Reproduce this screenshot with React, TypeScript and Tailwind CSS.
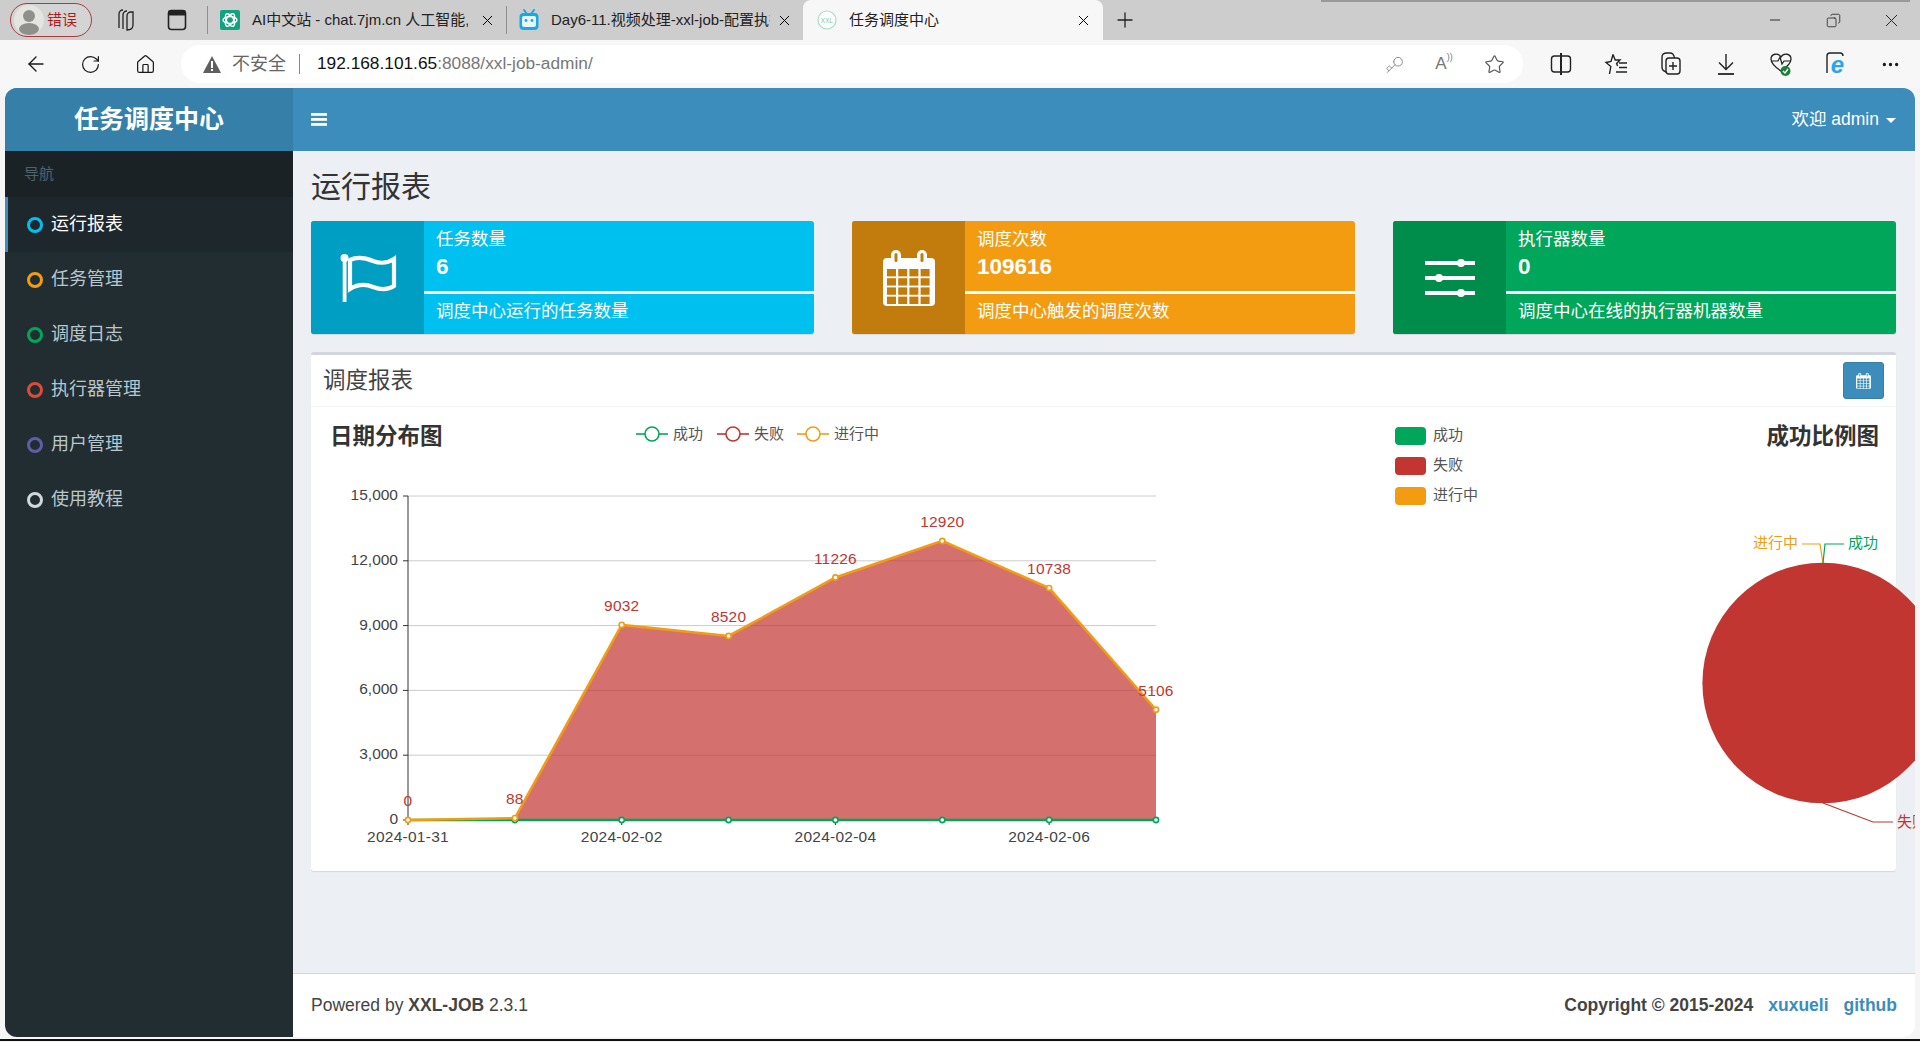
import React from 'react';
import { ArrowLeft, RotateCw, Home, Key, Star, Plus, X, Minus, Copy, MoreHorizontal } from 'lucide-react';

const menu = [
  { name: '运行报表', ring: 'border-[#00c0ef]', active: true },
  { name: '任务管理', ring: 'border-[#f39c12]' },
  { name: '调度日志', ring: 'border-[#00a65a]' },
  { name: '执行器管理', ring: 'border-[#dd4b39]' },
  { name: '用户管理', ring: 'border-[#605ca8]' },
  { name: '使用教程', ring: 'border-[#d2d6de]' },
];

// chart scale, page coordinates
const values = [0, 88, 9032, 8520, 11226, 12920, 10738, 5106];
const px = (i: number) => 408 + i * (748 / 7);
const py = (v: number) => 820 - v * 0.0216;
const topLine = values.map((v, i) => `${px(i)},${py(v)}`).join(' ');

const CalendarIcon = ({ w, h, hole }: { w: number; h: number; hole: string }) => (
  <svg width={w} height={h} viewBox="0 0 52 56">
    <rect x="0" y="8" width="52" height="48" rx="4" fill="#fff" />
    <rect x="8" y="0" width="10" height="14" rx="5" fill="#fff" />
    <rect x="34" y="0" width="10" height="14" rx="5" fill="#fff" />
    <rect x="11.5" y="3" width="3" height="9" rx="1.5" fill={hole} />
    <rect x="37.5" y="3" width="3" height="9" rx="1.5" fill={hole} />
    {[0, 1, 2, 3].map((r) =>
      [0, 1, 2, 3].map((c) => (
        <rect key={`${r}-${c}`} x={4 + c * 11.2} y={19 + r * 9.2} width="9" height="7.4" fill={hole} />
      ))
    )}
  </svg>
);

const FlagIcon = () => (
  <svg width="60" height="52" viewBox="338 250 60 52">
    <circle cx="344.5" cy="256" r="4" fill="#fff" />
    <rect x="342.7" y="256" width="3.8" height="44" fill="#fff" />
    <path d="M350 258C358 254 366 256 373 259C381 262 388 261 394 257V284C388 288 381 288 373 285C366 282 358 282 350 287Z" fill="none" stroke="#fff" strokeWidth="4.2" />
  </svg>
);

const SlidersIcon = () => (
  <svg width="50" height="44" viewBox="1424 253 50 44">
    <rect x="1424" y="258" width="50" height="4" fill="#fff" />
    <rect x="1424" y="273" width="50" height="4" fill="#fff" />
    <rect x="1424" y="288" width="50" height="4" fill="#fff" />
    <circle cx="1460" cy="260" r="4" fill="#fff" />
    <circle cx="1438" cy="275" r="4" fill="#fff" />
    <circle cx="1460" cy="290" r="4" fill="#fff" />
  </svg>
);

const infos = [
  { title: '任务数量', num: '6', desc: '调度中心运行的任务数量', bg: 'bg-[#00c0ef]', dark: 'bg-[#009ec2]', icon: <FlagIcon /> },
  { title: '调度次数', num: '109616', desc: '调度中心触发的调度次数', bg: 'bg-[#f39c12]', dark: 'bg-[#c27c0e]', icon: <CalendarIcon w={52} h={56} hole="#c27c0e" /> },
  { title: '执行器数量', num: '0', desc: '调度中心在线的执行器机器数量', bg: 'bg-[#00a65a]', dark: 'bg-[#008d4c]', icon: <SlidersIcon /> },
];

const LineChart = () => (
  <svg width="1060" height="464" viewBox="311 407 1060 464" className="shrink-0">
    <text x="330" y="444" fontSize="22.5" fontWeight="700" fill="#333">日期分布图</text>
    {[
      { x: 636, name: '成功', c: '#00a65a' },
      { x: 717, name: '失败', c: '#c23531' },
      { x: 797, name: '进行中', c: '#f39c12' },
    ].map((l) => (
      <g key={l.name}>
        <line x1={l.x} x2={l.x + 32} y1="434" y2="434" stroke={l.c} strokeWidth="1.6" />
        <circle cx={l.x + 16} cy="434" r="7" fill="#fff" stroke={l.c} strokeWidth="1.6" />
        <text x={l.x + 37} y="439" fontSize="15" fill="#555">{l.name}</text>
      </g>
    ))}
    {[15000, 12000, 9000, 6000, 3000, 0].map((v) => (
      <g key={v}>
        {v > 0 && <line x1="408" x2="1156" y1={py(v)} y2={py(v)} stroke="#ccc" />}
        <line x1="403" x2="408" y1={py(v)} y2={py(v)} stroke="#333" />
        <text x="398" y={py(v) + 4} fontSize="15.5" fill="#444" textAnchor="end">{v.toLocaleString('en-US')}</text>
      </g>
    ))}
    <line x1="408" x2="408" y1="496" y2="820" stroke="#333" />
    <polygon points={`408,820 ${topLine} 1156,820`} fill="#c23531" fillOpacity="0.7" />
    {['2024-01-31', '2024-02-02', '2024-02-04', '2024-02-06'].map((d, i) => (
      <g key={d}>
        <line x1={px(i * 2)} x2={px(i * 2)} y1="820" y2="825" stroke="#333" />
        <text x={px(i * 2)} y="842" fontSize="15.5" letterSpacing="0.25" fill="#444" textAnchor="middle">{d}</text>
      </g>
    ))}
    <line x1="408" x2="1156" y1="820" y2="820" stroke="#00a65a" strokeWidth="2.5" />
    {values.map((_, i) => i > 0 && <circle key={i} cx={px(i)} cy="820" r="2.6" fill="#fff" stroke="#00a65a" strokeWidth="1.6" />)}
    <polyline points={topLine} fill="none" stroke="#f39c12" strokeWidth="2.5" />
    {values.map((v, i) => (
      <g key={i}>
        <circle cx={px(i)} cy={py(v)} r="2.6" fill="#fff" stroke="#f39c12" strokeWidth="1.6" />
        <text x={px(i)} y={py(v) - 14} fontSize="15.5" letterSpacing="0.2" fill="#c23531" textAnchor="middle">{v}</text>
      </g>
    ))}
  </svg>
);

const PieChart = () => (
  <svg width="525" height="464" viewBox="1371 407 525 464" className="shrink-0 overflow-visible">
    {[
      { y: 427, name: '成功', c: '#00a65a' },
      { y: 457, name: '失败', c: '#c23531' },
      { y: 487, name: '进行中', c: '#f39c12' },
    ].map((l) => (
      <g key={l.name}>
        <rect x="1395" y={l.y} width="31" height="18" rx="4" fill={l.c} />
        <text x="1433" y={l.y + 13} fontSize="15" fill="#555">{l.name}</text>
      </g>
    ))}
    <text x="1879" y="444" fontSize="22.5" fontWeight="700" fill="#333" textAnchor="end">成功比例图</text>
    <circle cx="1822.7" cy="683" r="120.3" fill="#c23632" />
    <polyline points="1823,563 1820,544 1802,544" fill="none" stroke="#f39c12" strokeWidth="1.2" />
    <polyline points="1823,563 1825,544 1844,544" fill="none" stroke="#00a65a" strokeWidth="1.2" />
    <polyline points="1823,803 1873,822 1893,822" fill="none" stroke="#c23531" strokeWidth="1.2" />
    <text x="1798" y="548" fontSize="15" fill="#f39c12" textAnchor="end">进行中</text>
    <text x="1848" y="548" fontSize="15" fill="#00a65a">成功</text>
    <text x="1897" y="827" fontSize="15" fill="#c23531">失败</text>
  </svg>
);

const TabClose = () => <X size={17} strokeWidth={1.4} className="text-black" />;

const ToolCell = ({ children }: { children: React.ReactNode }) => (
  <div className="w-[55px] h-[38px] flex items-center justify-center">{children}</div>
);

const App = () => {
  return (
    <div className="w-[1920px] h-[1042px] overflow-hidden flex flex-col bg-[#f5f5f5] font-['Liberation_Sans','Noto_Sans_CJK_SC',sans-serif]">
      {/* tab strip */}
      <div className="relative h-10 shrink-0 flex items-center bg-[#cdcdcd] pl-[10px] text-[15px] text-[#222]">
        <div className="absolute top-0 left-[1321px] w-[589px] h-[2px] bg-[#999]" />
        <div className="w-[82px] h-[34px] shrink-0 flex items-center rounded-full border border-[#b03a3a] bg-[#d4d4d4] pl-[3px] gap-[3px]">
          <svg width="30" height="30" viewBox="0 0 30 30" className="shrink-0">
            <circle cx="15" cy="15" r="15" fill="#e4e4e0" />
            <circle cx="15" cy="11" r="6" fill="#8f8f8b" />
            <ellipse cx="15" cy="24" rx="10" ry="6" fill="#8f8f8b" />
          </svg>
          <span className="text-[15px] text-[#b01c1c]">错误</span>
        </div>
        <div className="ml-2 w-[50px] flex justify-center">
          <svg width="22" height="24" viewBox="0 0 22 24" fill="none" stroke="#222" strokeWidth="1.3">
            <path d="M5 20V6C5 3 7 2 9 2" />
            <path d="M9 21V7C9 4 11 3 13 3" />
            <path d="M13 22V8C13 5 15 4 17 4H19V17C19 20 17 22 13 22Z" />
          </svg>
        </div>
        <div className="ml-[2px] w-[50px] flex justify-center">
          <svg width="20" height="22" viewBox="0 0 20 22">
            <rect x="1.5" y="1.5" width="17" height="19" rx="3" fill="none" stroke="#222" strokeWidth="1.6" />
            <rect x="1.5" y="1.5" width="17" height="5" fill="#222" />
          </svg>
        </div>
        <div className="ml-[5px] w-px h-7 bg-[#8f8f8f]" />
        <div className="w-[298px] shrink-0 flex items-center pl-3">
          <svg width="20" height="20" viewBox="0 0 20 20" className="shrink-0">
            <rect width="20" height="20" rx="2" fill="#10a37f" />
            <g fill="none" stroke="#fff" strokeWidth="1.4">
              <ellipse cx="10" cy="10" rx="7" ry="3.5" />
              <ellipse cx="10" cy="10" rx="7" ry="3.5" transform="rotate(60 10 10)" />
              <ellipse cx="10" cy="10" rx="7" ry="3.5" transform="rotate(120 10 10)" />
            </g>
          </svg>
          <div className="ml-3 w-[216px] overflow-hidden whitespace-nowrap">AI中文站 - chat.7jm.cn 人工智能,</div>
          <div className="ml-[11px]"><TabClose /></div>
        </div>
        <div className="w-px h-7 bg-[#8f8f8f]" />
        <div className="w-[296px] shrink-0 flex items-center pl-3">
          <svg width="20" height="22" viewBox="0 0 20 22" className="shrink-0">
            <path d="M5 1L8 5M15 1L12 5" stroke="#17a9e0" strokeWidth="2" strokeLinecap="round" />
            <rect x="0.5" y="4" width="19" height="17" rx="4" fill="#17a9e0" />
            <rect x="3" y="7" width="14" height="11" rx="2" fill="#e6f6fc" />
            <circle cx="7" cy="11.5" r="1.4" fill="#17a9e0" />
            <circle cx="13" cy="11.5" r="1.4" fill="#17a9e0" />
          </svg>
          <div className="ml-[12px] w-[219px] overflow-hidden whitespace-nowrap">Day6-11.视频处理-xxl-job-配置执行器</div>
          <div className="ml-[6px]"><TabClose /></div>
        </div>
        <div className="w-[300px] h-10 shrink-0 flex items-center rounded-t-[8px] bg-[#f7f7f7] pl-[14px]">
          <svg width="20" height="20" viewBox="0 0 20 20" className="shrink-0">
            <circle cx="10" cy="10" r="9" fill="#fff" stroke="#a8dcc4" strokeWidth="1.2" />
            <text x="10" y="12.5" fontSize="6.5" fill="#7cc7a4" textAnchor="middle">XXL</text>
          </svg>
          <div className="ml-3 w-[226px]">任务调度中心</div>
          <TabClose />
        </div>
        <div className="w-10 shrink-0 flex justify-center ml-[2px]"><Plus size={24} strokeWidth={1.3} /></div>
        <div className="flex-1" />
        <div className="w-[58px] flex justify-center"><Minus size={16} strokeWidth={1.4} /></div>
        <div className="w-[58px] flex justify-center"><Copy size={15} strokeWidth={1.3} className="-scale-x-100" /></div>
        <div className="w-[58px] flex justify-center"><X size={21} strokeWidth={1.1} /></div>
      </div>

      {/* toolbar */}
      <div className="h-12 shrink-0 flex items-start pt-[5px] pl-2 bg-[#f7f7f7] text-[#1a1a1a]">
        <ToolCell><ArrowLeft size={24} strokeWidth={1.4} /></ToolCell>
        <ToolCell><RotateCw size={21} strokeWidth={1.4} /></ToolCell>
        <ToolCell><Home size={21} strokeWidth={1.4} /></ToolCell>
        <div className="ml-2 w-[1342px] h-[38px] shrink-0 flex items-center rounded-full bg-white pl-[22px] pr-1">
          <svg width="18" height="17" viewBox="0 0 18 17" className="shrink-0">
            <path d="M9 0L18 17H0Z" fill="#5f5f5f" />
            <rect x="8" y="5" width="2" height="7" fill="#fff" />
            <rect x="8" y="13" width="2" height="2" fill="#fff" />
          </svg>
          <span className="ml-[11px] text-[18px] text-[#666]">不安全</span>
          <div className="ml-[13px] w-px h-5 bg-[#888]" />
          <span className="ml-[17px] text-[17.3px] text-[#111]">192.168.101.65<span className="text-[#777]">:8088/xxl-job-admin/</span></span>
          <div className="flex-1" />
          <div className="w-[50px] flex justify-center text-[#888]"><Key size={19} strokeWidth={1.2} className="rotate-180" /></div>
          <div className="w-[50px] flex justify-center text-[17px] text-[#777]">A<span className="text-[9px]">))</span></div>
          <div className="w-[50px] flex justify-center text-[#555]"><Star size={21} strokeWidth={1.3} /></div>
        </div>
        <div className="ml-[10px]">
          <ToolCell>
            <svg width="22" height="24" viewBox="0 0 22 24" fill="none" stroke="#222" strokeWidth="1.4">
              <rect x="1.5" y="4" width="19" height="16" rx="3" />
              <path d="M11 1V23" strokeWidth="2" />
            </svg>
          </ToolCell>
        </div>
        <ToolCell>
          <svg width="24" height="24" viewBox="0 0 24 24" fill="none" stroke="#222" strokeWidth="1.4">
            <path d="M9 2.5L11.2 8H16L12.6 11.5L13.6 14M5.5 22L6.8 14.5L2 10.5L7 9.5L9 2.5" />
            <path d="M15 11H23M15 15.5H23M12 20H23" />
          </svg>
        </ToolCell>
        <ToolCell>
          <svg width="24" height="26" viewBox="0 0 24 26" fill="none" stroke="#222" strokeWidth="1.4">
            <path d="M7 21C4 20 3 19 3 16V6C3 3 5 2 8 2H11C14 2 15 4 15.5 7" />
            <rect x="7" y="7" width="14" height="16" rx="3" />
            <path d="M14 11V19M10 15H18" />
          </svg>
        </ToolCell>
        <ToolCell>
          <svg width="22" height="24" viewBox="0 0 22 24" fill="none" stroke="#222" strokeWidth="1.4">
            <path d="M11 2V17M4 10.5L11 17.5L18 10.5" />
            <path d="M3 22H19" strokeWidth="1.8" />
          </svg>
        </ToolCell>
        <ToolCell>
          <svg width="24" height="26" viewBox="0 0 24 26">
            <path d="M12 20C6 16 2 12 2 8C2 3 9 1 12 6C15 1 22 3 22 8C22 12 18 16 12 20Z" fill="none" stroke="#222" strokeWidth="1.3" />
            <path d="M3 10H9L11 6L13 13L15 10H21" fill="none" stroke="#222" strokeWidth="1.2" />
            <circle cx="16.5" cy="20" r="5" fill="#1a7f37" />
            <path d="M14 20L16 22L19 18" fill="none" stroke="#fff" strokeWidth="1.3" />
          </svg>
        </ToolCell>
        <ToolCell>
          <svg width="24" height="26" viewBox="0 0 24 26">
            <path d="M3 22V5C3 3 4 2 6 2H16C18 2 19 3 19 5" fill="none" stroke="#222" strokeWidth="1.4" />
            <text x="13.5" y="22" fontSize="24" fontWeight="700" fontStyle="italic" fill="#2aa4ee" textAnchor="middle">e</text>
          </svg>
        </ToolCell>
        <ToolCell><MoreHorizontal size={21} strokeWidth={1.8} /></ToolCell>
      </div>

      {/* page */}
      <div className="h-[949px] shrink-0 mx-[5px] flex flex-col overflow-hidden rounded-[12px] bg-[#ecf0f5] text-[#333]">
        <header className="h-[63px] shrink-0 flex bg-[#3c8dbc] text-white">
          <div className="w-[288px] shrink-0 flex items-center justify-center bg-[#367fa9] text-[25px] font-bold">任务调度中心</div>
          <div className="ml-[18px] flex items-center">
            <svg width="16" height="13" viewBox="0 0 16 13">
              <rect width="16" height="2.8" fill="#fff" />
              <rect y="5" width="16" height="2.8" fill="#fff" />
              <rect y="10" width="16" height="2.8" fill="#fff" />
            </svg>
          </div>
          <div className="flex-1" />
          <div className="flex items-center pr-[19px] text-[17.5px]">
            欢迎 admin
            <span className="ml-[7px] mt-[2px] w-0 h-0 border-x-[5px] border-x-transparent border-t-[5px] border-t-white" />
          </div>
        </header>

        <div className="flex-1 flex min-h-0">
          <aside className="w-[288px] shrink-0 bg-[#222d32] text-[18px] text-[#b8c7ce]">
            <div className="h-[46px] flex items-center pl-[19px] bg-[#1a2226] text-[15px] text-[#4b646f]">导航</div>
            {menu.map((m) => (
              <div
                key={m.name}
                className={`h-[55px] flex items-center pl-[19px] border-l-[3px] ${m.active ? 'border-l-[#3c8dbc] bg-[#1e282c] text-white' : 'border-l-transparent'}`}
              >
                <span className={`w-4 h-4 shrink-0 rounded-full border-[3px] ${m.ring}`} />
                <span className="ml-2">{m.name}</span>
              </div>
            ))}
          </aside>

          <main className="flex-1 min-w-0 flex flex-col">
            <div className="flex-1 min-h-0 pl-[18px] pr-[19px] pt-[15px]">
              <h1 className="h-[42px] mb-[13px] text-[30px] leading-[42px] text-[#333]">运行报表</h1>
              <div className="grid grid-cols-3 gap-[38px]">
                {infos.map((b) => (
                  <div key={b.title} className={`h-[113px] flex rounded-[3px] shadow-[0_1px_1px_rgba(0,0,0,0.1)] text-white overflow-hidden ${b.bg}`}>
                    <div className={`w-[113px] shrink-0 flex items-center justify-center ${b.dark}`}>{b.icon}</div>
                    <div className="flex-1 pt-[6px]">
                      <div className="px-3 h-[25px] text-[17.5px] leading-[25px]">{b.title}</div>
                      <div className="px-3 h-[29px] text-[22.5px] leading-[29px] font-bold">{b.num}</div>
                      <div className="mt-[10px] h-[3px] bg-white" />
                      <div className="px-3 mt-[5px] h-[25px] text-[17.5px] leading-[25px]">{b.desc}</div>
                    </div>
                  </div>
                ))}
              </div>

              <section className="mt-[18px] h-[519px] rounded-[3px] border-t-[3px] border-t-[#d2d6de] bg-white shadow-[0_1px_1px_rgba(0,0,0,0.1)]">
                <div className="h-[52px] flex items-center justify-between pl-[12px] pr-3 border-b border-b-[#f4f4f4]">
                  <h3 className="text-[22.5px] text-[#444]">调度报表</h3>
                  <button className="w-[41px] h-[37px] flex items-center justify-center rounded-[3px] border border-[#367fa9] bg-[#3c8dbc]">
                    <CalendarIcon w={15} h={16} hole="#3c8dbc" />
                  </button>
                </div>
                <div className="flex h-[464px]">
                  <LineChart />
                  <PieChart />
                </div>
              </section>
            </div>

            <footer className="h-[64px] shrink-0 flex items-center justify-between pl-[18px] pr-[18px] border-t border-t-[#d2d6de] bg-white text-[17.5px] text-[#444]">
              <div>Powered by <b>XXL-JOB</b> 2.3.1</div>
              <div className="font-bold">
                Copyright © 2015-2024
                <a className="ml-[15px] text-[#3c8dbc]">xuxueli</a>
                <a className="ml-[15px] text-[#3c8dbc]">github</a>
              </div>
            </footer>
          </main>
        </div>
      </div>
      <div className="mt-[2px] h-[2px] bg-[#111]" />
    </div>
  );
};

export default App;
